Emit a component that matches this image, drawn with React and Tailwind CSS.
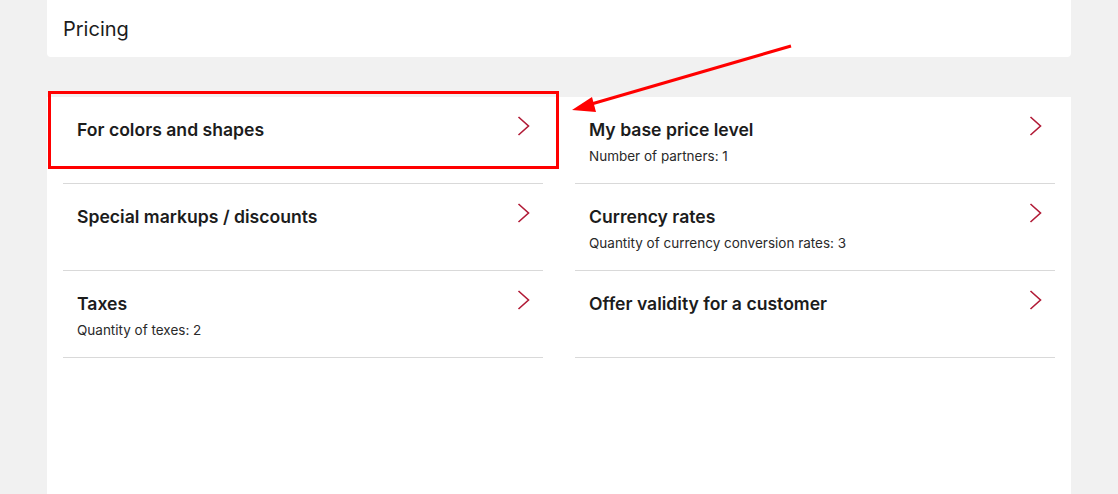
const items = [
  { title: "For colors and shapes" },
  { title: "My base price level", sub: "Number of partners: 1" },
  { title: "Special markups / discounts" },
  { title: "Currency rates", sub: "Quantity of currency conversion rates: 3" },
  { title: "Taxes", sub: "Quantity of texes: 2" },
  { title: "Offer validity for a customer" },
];

const Chevron = () => (
  <svg width="14" height="20" viewBox="0 0 14 20" fill="none" className="shrink-0 mt-[-2px]">
    <path d="M1.5 1 L11.5 10 L1.5 19" stroke="#b11a36" strokeWidth="1.6" />
  </svg>
);

const App = () => {
  return (
    <div className="relative min-h-[494px] bg-[#f1f1f1] px-[47px] font-['Inter',sans-serif] text-[#1c1c1c]">
      <div className="flex h-[57px] items-center rounded-b bg-white px-4">
        <h1 className="text-[20px] font-normal">Pricing</h1>
      </div>

      <div className="mt-10 min-h-[397px] bg-white px-4">
        <div className="grid grid-cols-2 gap-x-8">
          {items.map((item) => (
            <div
              key={item.title}
              className="flex h-[87px] items-start justify-between border-b border-[#d9d9d9] pl-[14px] pr-[12px] pt-[21px]"
            >
              <div>
                <h3 className="text-[17.6px] font-semibold leading-6">{item.title}</h3>
                {item.sub && <p className="mt-1 text-[13.5px] leading-5 text-[#2a2a2a]">{item.sub}</p>}
              </div>
              <Chevron />
            </div>
          ))}
        </div>
      </div>

      {/* annotation */}
      <div className="absolute left-[48px] top-[91px] h-[78px] w-[511px] border-[3px] border-[#ff0000]" />
      <svg className="absolute left-0 top-0" width="1118" height="494" fill="none">
        <line x1="791" y1="46" x2="588" y2="105" stroke="#ff0000" strokeWidth="3" />
        <polygon points="572,110 592,97 596,112" fill="#ff0000" />
      </svg>
    </div>
  );
};

export default App;
